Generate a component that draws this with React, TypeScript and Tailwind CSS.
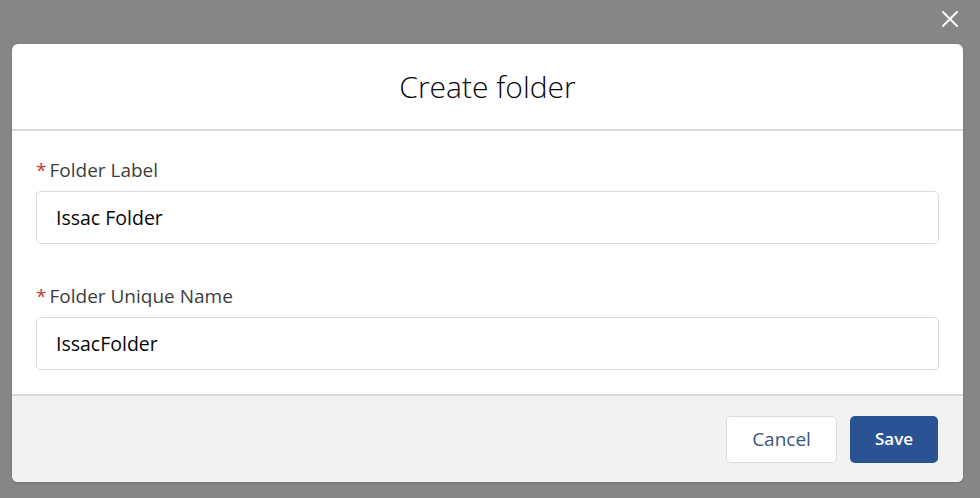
function Field({ label, value }: { label: string; value: string }) {
  return (
    <div className="flex flex-col">
      <label className="flex items-baseline text-[19px] leading-[26px] text-[#3e3e3c]">
        <span className="mr-[3px] text-[#c23934]">*</span>
        {label}
      </label>
      <div className="mt-[8px] flex h-[53px] items-center rounded-[5px] border border-[#dddbda] bg-white px-[19px] text-[19.5px] text-[#080707]">
        {value}
      </div>
    </div>
  );
}

export default function App() {
  return (
    <div
      className="relative h-[498px] w-[980px] bg-[#868686] pt-[44px] pl-[12px]"
      style={{ fontFamily: "'Open Sans', 'Liberation Sans', sans-serif" }}
    >
      <button className="absolute top-[11px] left-[942px] text-white">
        <svg width="16" height="16" viewBox="0 0 16 16" fill="none" stroke="currentColor" strokeWidth="2" strokeLinecap="round">
          <path d="M1 1 L15 15 M15 1 L1 15" />
        </svg>
      </button>

      <div className="flex w-[951px] flex-col overflow-hidden rounded-[6px] bg-white shadow-sm">
        <div className="flex h-[87px] items-center justify-center border-b-2 border-[#dddbda]">
          <h2 className="text-[30px] font-light text-[#080707]">Create folder</h2>
        </div>

        <div className="flex flex-col gap-[39px] px-[24px] pt-[26px] pb-[24px]">
          <Field label="Folder Label" value="Issac Folder" />
          <Field label="Folder Unique Name" value="IssacFolder" />
        </div>

        <div className="flex h-[88px] items-center justify-end gap-[13px] border-t-2 border-[#dddbda] bg-[#f3f2f2] px-[25px]">
          <button className="h-[47px] w-[111px] rounded-[5px] border border-[#dddbda] bg-white text-[19px] text-[#3b5580]">
            Cancel
          </button>
          <button className="h-[47px] w-[88px] rounded-[5px] bg-[#2a5394] text-[17px] font-semibold text-white">
            Save
          </button>
        </div>
      </div>
    </div>
  );
}
